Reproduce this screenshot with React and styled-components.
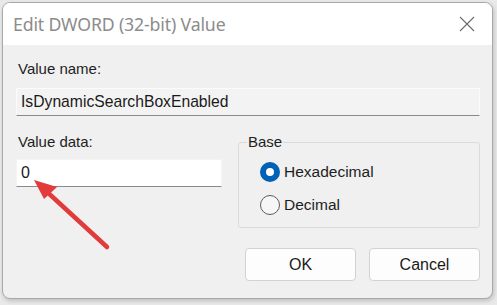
import React from 'react'
import styled, { createGlobalStyle } from 'styled-components'

const GlobalStyle = createGlobalStyle`
    html, body {
        margin: 0;
        padding: 0;
        background: #e9e9e9;
    }
    body {
        width: 497px;
        height: 305px;
        overflow: hidden;
    }
`

const Window = styled.div`
    position: relative;
    margin: 2px 0 0 2px;
    width: 489px;
    height: 295px;
    border: 1px solid #a9a9a9;
    border-radius: 8px;
    overflow: hidden;
    background: #f0f0f0;
    display: flex;
    flex-direction: column;
    box-shadow: 1px 2px 4px rgba(0, 0, 0, 0.18);
`

const TitleBar = styled.div`
    height: 42px;
    flex: 0 0 42px;
    background: #ffffff;
    display: flex;
    align-items: center;
    justify-content: space-between;
    padding: 0 12px 0 10px;
    > .title {
        font-family: "Noto Sans", "Open Sans", sans-serif;
        font-size: 17.7px;
        color: #8c8c8c;
        letter-spacing: -0.15px;
    }
`

const CloseBtn = styled.div`
    width: 20px;
    height: 20px;
    display: flex;
    align-items: center;
    justify-content: center;
    margin-right: 3px;
`

const Body = styled.div`
    flex: 1;
    display: flex;
    flex-direction: column;
    padding: 15px 12px 0 13px;
    font-family: "Liberation Sans", Arial, sans-serif;
    color: #1e1e1e;
`

const Label = styled.div`
    font-size: 15px;
    line-height: 18px;
    padding-left: 2px;
    margin-bottom: ${p => p.gap || 10}px;
`

const Field = styled.div`
    height: 28px;
    box-sizing: border-box;
    display: flex;
    align-items: center;
    padding: 0 4px;
    font-size: ${p => (p.mono ? 16 : 15.7)}px;
    background: ${p => (p.readOnly ? '#f3f3f3' : '#ffffff')};
    border: 1px solid ${p => (p.readOnly ? '#fbfbfb' : '#f4f4f4')};
    border-bottom: 1px solid #8a8a8a;
    color: #1a1a1a;
`

const Lower = styled.div`
    display: grid;
    grid-template-columns: 206px 1fr;
    column-gap: 16px;
    margin-top: 17px;
`

const GroupBox = styled.fieldset`
    margin: 0;
    padding: 0;
    border: 1px solid #dadada;
    border-radius: 3px;
    height: 95px;
    box-sizing: border-box;
    > legend {
        font-size: 15px;
        line-height: 18px;
        padding: 0 1px;
        margin-left: 8px;
    }
`

const Options = styled.div`
    display: flex;
    flex-direction: column;
    gap: 13px;
    padding: 11px 0 0 21px;
`

const Radio = styled.label`
    display: flex;
    align-items: center;
    gap: 4px;
    font-size: 15.5px;
    line-height: 20px;
    > .dot {
        width: 20px;
        height: 20px;
        box-sizing: border-box;
        border-radius: 50%;
        border: ${p => (p.checked ? '6.5px solid #0062b6' : '1px solid #5c5c5c')};
        background: ${p => (p.checked ? '#ffffff' : '#f6f6f6')};
    }
`

const ButtonRow = styled.div`
    display: flex;
    justify-content: flex-end;
    gap: 13px;
    margin-top: 20px;
`

const Button = styled.div`
    width: 111px;
    height: 33px;
    box-sizing: border-box;
    display: flex;
    align-items: center;
    justify-content: center;
    background: #fdfdfd;
    border: 1px solid #d2d2d2;
    border-radius: 4px;
    font-size: 16px;
    color: #1a1a1a;
`

const Arrow = styled.svg`
    position: absolute;
    left: 0;
    top: 0;
    pointer-events: none;
`

function App() {
    return (
        <>
            <GlobalStyle />
            <Window>
                <TitleBar>
                    <span className="title">Edit DWORD (32-bit) Value</span>
                    <CloseBtn>
                        <svg width="16" height="16" viewBox="0 0 16 16">
                            <path d="M1 1 L15 15 M15 1 L1 15" stroke="#6a6a6a" strokeWidth="1.1" fill="none" />
                        </svg>
                    </CloseBtn>
                </TitleBar>
                <Body>
                    <Label>Value name:</Label>
                    <Field readOnly>IsDynamicSearchBoxEnabled</Field>
                    <Lower>
                        <div>
                            <Label gap={8}>Value data:</Label>
                            <Field mono>0</Field>
                        </div>
                        <GroupBox>
                            <legend>Base</legend>
                            <Options>
                                <Radio checked>
                                    <span className="dot" />
                                    Hexadecimal
                                </Radio>
                                <Radio>
                                    <span className="dot" />
                                    Decimal
                                </Radio>
                            </Options>
                        </GroupBox>
                    </Lower>
                    <ButtonRow>
                        <Button>OK</Button>
                        <Button>Cancel</Button>
                    </ButtonRow>
                </Body>
                {/* red annotation arrow */}
                <Arrow width="489" height="295" viewBox="0 0 489 295">
                    <line x1="104" y1="244" x2="42" y2="187" stroke="#e23b3b" strokeWidth="4.5" strokeLinecap="round" />
                    <polygon points="31,177 54,184 41,196" fill="#e23b3b" />
                </Arrow>
            </Window>
        </>
    )
}

export default App
